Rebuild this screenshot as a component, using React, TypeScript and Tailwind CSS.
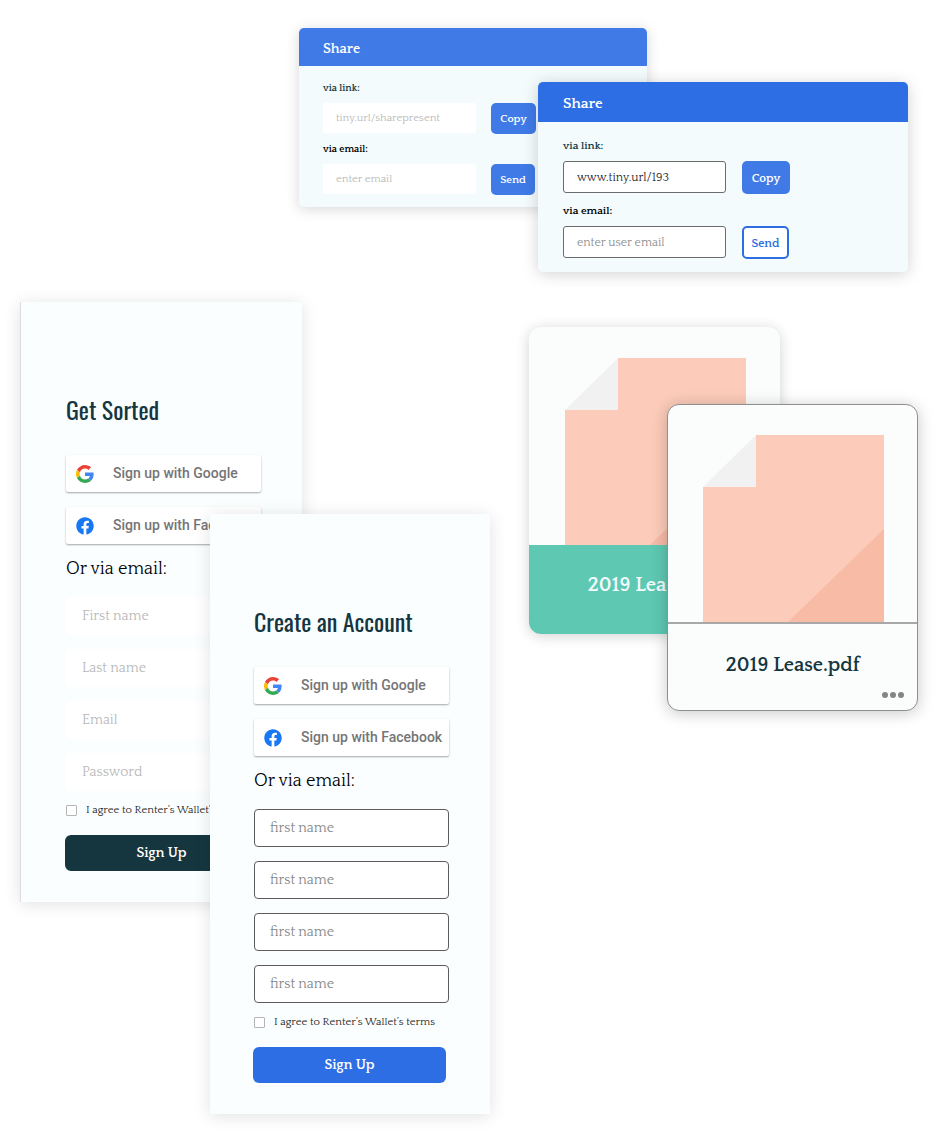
import { useId } from "react";
import { FaFacebook } from "react-icons/fa";

const serif = "font-['Quattrocento','Liberation_Serif',serif]";
const condensed = "font-['Oswald','Liberation_Sans_Narrow','Roboto_Condensed','Open_Sans_Condensed',sans-serif]";

function GoogleLogo() {
  return (
    <svg viewBox="0 0 48 48" className="size-[18px] shrink-0" aria-hidden="true">
      <path fill="#EA4335" d="M24 9.5c3.54 0 6.71 1.22 9.21 3.6l6.85-6.85C35.9 2.38 30.47 0 24 0 14.62 0 6.51 5.38 2.56 13.22l7.98 6.19C12.43 13.72 17.74 9.5 24 9.5z" />
      <path fill="#4285F4" d="M46.98 24.55c0-1.57-.15-3.09-.38-4.55H24v9.02h12.94c-.58 2.96-2.26 5.48-4.78 7.18l7.73 6c4.51-4.18 7.09-10.36 7.09-17.65z" />
      <path fill="#FBBC05" d="M10.53 28.59c-.48-1.45-.76-2.99-.76-4.59s.27-3.14.76-4.59l-7.98-6.19C.92 16.46 0 20.12 0 24c0 3.88.92 7.54 2.56 10.78l7.97-6.19z" />
      <path fill="#34A853" d="M24 48c6.48 0 11.93-2.13 15.89-5.81l-7.73-6c-2.15 1.45-4.92 2.3-8.16 2.3-6.26 0-11.57-4.22-13.47-9.91l-7.98 6.19C6.51 42.62 14.62 48 24 48z" />
    </svg>
  );
}

const shareStyles = {
  before: {
    card: "w-[348px] shadow-[0_2px_14px_rgba(0,0,0,0.16)]",
    header: "h-[38px] bg-[#407ae7] px-6 pt-1 text-[14px]",
    body: "px-6 pt-[15px] pb-3",
    label: "mb-1.5 text-[10px]",
    second: "mt-2",
    row: "h-[31px] gap-[15px]",
    input: "h-[30px] w-[153px] px-[13px] text-[11px] placeholder:text-[#b8b8b8]",
    copy: "w-[45px] bg-[#407ae7] text-[11px] text-white",
    send: "w-11 bg-[#407ae7] text-[11px] text-white",
  },
  after: {
    card: "mt-[54px] ml-[239px] w-[370px] shadow-[0_2px_16px_rgba(0,0,0,0.18)]",
    header: "h-10 bg-[#2d6ee4] px-[25px] pt-1 text-[15px]",
    body: "px-[25px] pt-4 pb-[13px]",
    label: "mb-[7px] text-[11px]",
    second: "mt-[9px]",
    row: "h-[33px] gap-4",
    input: "h-8 w-[163px] border border-[#6b6b6b] px-[13px] text-[12px] placeholder:text-[#8c8c8c]",
    copy: "w-12 bg-[#407ae7] text-[12px] text-white",
    send: "w-[47px] border-2 border-[#2d6ee4] bg-white text-[12px] text-[#2d6ee4]",
  },
};

type ShareProps = {
  variant: "before" | "after";
  link?: string;
  linkHint?: string;
  emailHint: string;
};

function ShareCard({ variant, link, linkHint, emailHint }: ShareProps) {
  const s = shareStyles[variant];
  const id = useId();
  return (
    <section className={`[grid-area:1/1] self-start overflow-hidden rounded-[5px] bg-[#f3fbfd] ${s.card}`}>
      <h2 className={`flex items-center font-bold text-white ${s.header}`}>Share</h2>
      <div className={s.body}>
        <label htmlFor={`${id}-link`} className={`block leading-4 font-bold text-[#173b45] ${s.label}`}>via link:</label>
        <div className={`flex items-start ${s.row}`}>
          <input id={`${id}-link`} type="text" defaultValue={link} placeholder={linkHint} className={`rounded-[3px] bg-white text-[#222] ${s.input}`} />
          <button type="button" className={`h-full rounded-[5px] pt-0.5 text-center font-bold ${s.copy}`}>Copy</button>
        </div>
        <label htmlFor={`${id}-email`} className={`block leading-4 font-bold text-black ${s.label} ${s.second}`}>via email:</label>
        <div className={`flex items-start ${s.row}`}>
          <input id={`${id}-email`} type="email" placeholder={emailHint} className={`rounded-[3px] bg-white text-[#222] ${s.input}`} />
          <button type="button" className={`h-full rounded-[5px] pt-0.5 text-center font-bold ${s.send}`}>Send</button>
        </div>
      </div>
    </section>
  );
}

const signUpStyles = {
  before: {
    card: "w-[282px] border-l border-[#dadddd] pl-[45px]",
    input: "px-4 placeholder:text-[#b8b8b8]",
    button: "bg-[#16363f]",
  },
  after: {
    card: "mt-[212px] ml-[190px] w-[280px] pl-11",
    input: "border border-[#5c5c5c] px-[15px] placeholder:text-[#858585]",
    button: "bg-[#2d6ee4]",
  },
};

type SignUpProps = { variant: "before" | "after"; title: string; fields: string[] };

function SignUpCard({ variant, title, fields }: SignUpProps) {
  const s = signUpStyles[variant];
  const social = "flex h-[37px] items-center gap-[19px] rounded-[2px] bg-white pl-2.5 font-['Roboto',sans-serif] text-[14px] font-medium whitespace-nowrap text-[#757575] shadow-[0_1px_2px_rgba(0,0,0,0.35)]";
  return (
    <section className={`[grid-area:1/1] self-start bg-[#fafeff] pt-[87px] pb-[31px] shadow-[0_2px_16px_rgba(0,0,0,0.12)] ${s.card}`}>
      <form className="w-[195px]">
        <h2 className={`text-[24px] leading-10 text-[#16363f] ${condensed}`}>{title}</h2>
        <div className="mt-[26px] flex flex-col gap-[15px]">
          <button type="button" className={social}>
            <GoogleLogo />
            Sign up with Google
          </button>
          <button type="button" className={social}>
            <FaFacebook className="size-[18px] shrink-0 text-[#1877f2]" aria-hidden="true" />
            Sign up with Facebook
          </button>
        </div>
        <p className="mt-[13px] text-[18px] leading-6 text-black">Or via email:</p>
        <div className="mt-4 flex flex-col gap-3.5">
          {fields.map((name, i) => (
            <input
              key={i}
              type={name === "Password" ? "password" : "text"}
              aria-label={name}
              placeholder={name}
              className={`h-[38px] w-full rounded-[4px] bg-white text-[14px] ${s.input}`}
            />
          ))}
        </div>
        <label className="mt-[9px] flex h-5 items-center gap-[9px] text-[11px] whitespace-nowrap text-[#222]">
          <input type="checkbox" className="size-[11px] shrink-0 appearance-none rounded-[1px] border border-[#b5b5b5] bg-white checked:bg-[#2d6ee4]" />
          I agree to Renter’s Wallet’s terms
        </label>
        <button type="submit" className={`mt-[15px] -ml-px h-9 w-[193px] rounded-[6px] text-center text-[14px] font-bold text-white ${s.button}`}>
          Sign Up
        </button>
      </form>
    </section>
  );
}

function DocumentArt() {
  return (
    <svg viewBox="0 0 181 188" className="block h-[188px] w-[181px]" aria-hidden="true">
      <path fill="#fccbb9" d="M53 0H181V188H0V52H53Z" />
      <path fill="#f1f1f1" d="M0 52L53 0V52Z" />
      <path fill="#f7bba6" d="M84 188L181 94V188Z" />
    </svg>
  );
}

function FileCards() {
  return (
    <div className="mt-[25px] grid shrink-0">
      <article className="w-[251px] self-start overflow-hidden rounded-[12px] bg-[#fbfdfd] pt-[31px] shadow-[0_2px_14px_rgba(0,0,0,0.18)] [grid-area:1/1]">
        <div className="h-[187px] overflow-hidden pl-9"><DocumentArt /></div>
        <h3 className="h-[89px] bg-[#5ec8b2] pt-[26px] text-center text-[20px] leading-7 font-bold text-[#f3fbfd]">2019 Lease.pdf</h3>
      </article>
      <article className="mt-[77px] ml-[138px] w-[251px] self-start rounded-[12px] border border-[#8f8f8f] bg-[#fbfdfd] pt-[30px] shadow-[0_2px_16px_rgba(0,0,0,0.22)] [grid-area:1/1]">
        <div className="h-[187px] overflow-hidden pl-[35px]"><DocumentArt /></div>
        <div className="h-[88px] border-t-2 border-[#a8a8a8] pt-[27px]">
          <h3 className="text-center text-[20px] leading-7 font-bold text-[#16363f]">2019 Lease.pdf</h3>
          <button type="button" aria-label="More options" className="mt-3 mr-3 ml-auto block">
            <svg viewBox="0 0 24 8" className="h-2 w-6 fill-[#858585]" aria-hidden="true">
              <circle cx="4" cy="4" r="3" />
              <circle cx="12" cy="4" r="3" />
              <circle cx="20" cy="4" r="3" />
            </svg>
          </button>
        </div>
      </article>
    </div>
  );
}

export default function App() {
  return (
    <main className={`mx-auto max-w-[950px] bg-white pt-7 pb-5 ${serif}`}>
      <div className="flex justify-end pr-[42px]">
        <div className="grid">
          <ShareCard variant="before" linkHint="tiny.url/sharepresent" emailHint="enter email" />
          <ShareCard variant="after" link="www.tiny.url/193" emailHint="enter user email" />
        </div>
      </div>
      <div className="mt-[30px] flex items-start justify-between pr-8 pl-5">
        <div className="grid shrink-0">
          <SignUpCard variant="before" title="Get Sorted" fields={["First name", "Last name", "Email", "Password"]} />
          <SignUpCard variant="after" title="Create an Account" fields={["first name", "first name", "first name", "first name"]} />
        </div>
        <FileCards />
      </div>
    </main>
  );
}
